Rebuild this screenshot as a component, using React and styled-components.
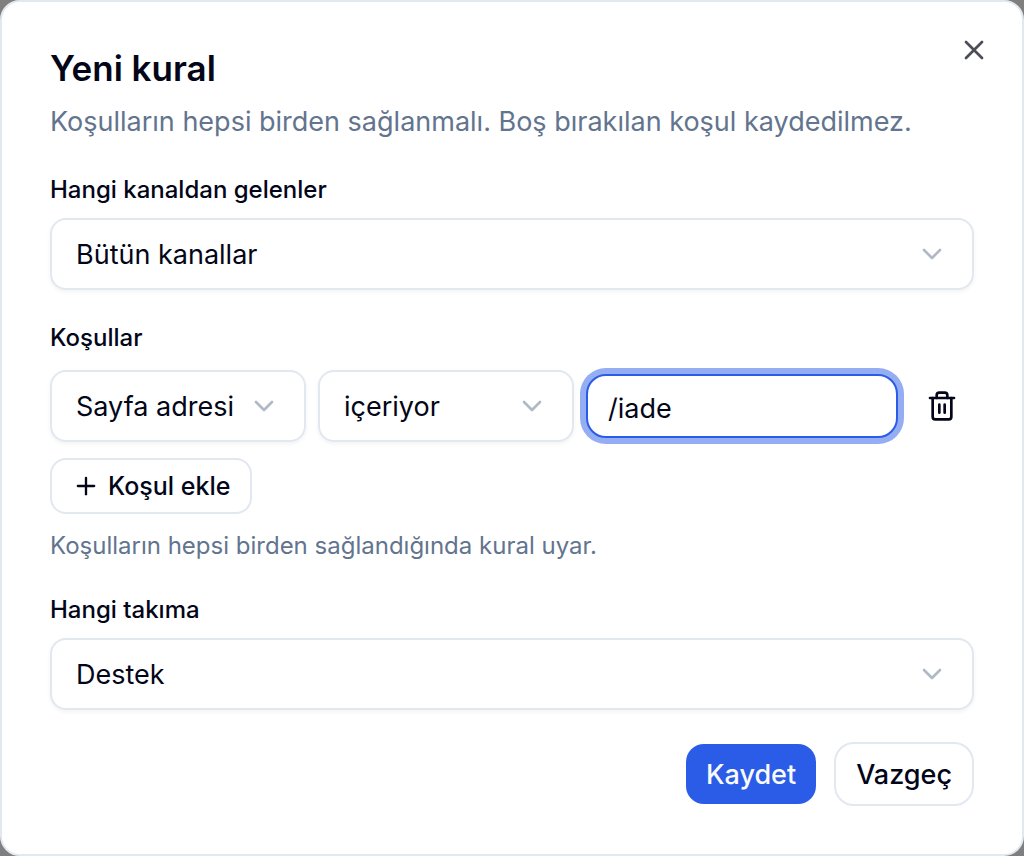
import React, { useState } from "react";
import styled, { createGlobalStyle, css } from "styled-components";
import { ChevronDown, Plus, Trash2, X } from "lucide-react";

const GlobalStyle = createGlobalStyle`
  *, *::before, *::after { box-sizing: border-box; }
  body {
    margin: 0;
    background: #7f7f7f;
    color: #020618;
    font-family: Inter, "Liberation Sans", sans-serif;
    -webkit-font-smoothing: antialiased;
  }
  button, input, select { font: inherit; color: inherit; margin: 0; }
`;

const Backdrop = styled.div`
  min-height: 100vh;
  display: grid;
  align-items: center;
  background: #7f7f7f;
`;

const Dialog = styled.section`
  position: relative;
  display: flex;
  flex-direction: column;
  gap: 32px;
  padding: 48px;
  background: #fff;
  border: 2px solid #e2e8f0;
  border-radius: 20px;
`;

const Header = styled.header`
  display: flex;
  flex-direction: column;
  gap: 16px;
`;

const Title = styled.h1`
  margin: 0;
  font-size: 35px;
  line-height: 36px;
  font-weight: 600;
`;

const Description = styled.p`
  margin: 0;
  font-size: 27px;
  line-height: 40px;
  color: #62748e;
`;

const CloseButton = styled.button`
  position: absolute;
  top: 32px;
  right: 32px;
  display: flex;
  padding: 0;
  border: 0;
  background: none;
  color: #4b4d5a;
  cursor: pointer;
`;

const Form = styled.form`
  display: flex;
  flex-direction: column;
  gap: 32px;
`;

const Field = styled.div`
  display: flex;
  flex-direction: column;
  gap: 12px;
`;

const ConditionGroup = styled.fieldset`
  display: flex;
  flex-direction: column;
  align-items: flex-start;
  gap: 16px;
  margin: 0;
  padding: 0;
  border: 0;
  min-width: 0;
`;

const labelText = css`
  font-size: 24px;
  line-height: 32px;
  font-weight: 500;
`;

const Label = styled.label`
  ${labelText}
`;

const GroupLabel = styled.div`
  ${labelText}
`;

const SelectBox = styled.div`
  position: relative;
  min-width: 0;
`;

const Select = styled.select`
  display: block;
  width: 100%;
  height: 72px;
  padding: 0 64px 0 24px;
  appearance: none;
  background: #fff;
  border: 2px solid #e2e8f0;
  border-radius: 16px;
  box-shadow: 0 2px 4px rgba(0, 0, 0, 0.05);
  font-size: 27px;
  outline: none;
`;

const Chevron = styled(ChevronDown)`
  position: absolute;
  top: 0;
  bottom: 0;
  right: 26px;
  margin: auto 0;
  color: #b0bac7;
  pointer-events: none;
`;

const ConditionRow = styled.div`
  align-self: stretch;
  display: grid;
  grid-template-columns: 256px 256px minmax(0, 1fr) 64px;
  align-items: center;
  gap: 12px;
`;

const ValueInput = styled.input`
  width: 100%;
  min-width: 0;
  height: 64px;
  padding: 4px 20px 0;
  background: #fff;
  border: 2px solid ${(p) => (p.$active ? "#2b5ce7" : "#e2e8f0")};
  border-radius: 20px;
  box-shadow: ${(p) => (p.$active ? "0 0 0 6px #95adf3" : "none")};
  font-size: 27px;
  outline: none;
`;

const IconButton = styled.button`
  display: flex;
  align-items: center;
  justify-content: center;
  height: 64px;
  padding: 0;
  border: 0;
  background: none;
  cursor: pointer;
`;

const AddButton = styled.button`
  display: flex;
  align-items: center;
  gap: 8px;
  height: 56px;
  padding: 0 20px;
  background: #fff;
  border: 2px solid #e2e8f0;
  border-radius: 16px;
  font-size: 25px;
  font-weight: 500;
  cursor: pointer;
`;

const Hint = styled.p`
  margin: 0;
  font-size: 24px;
  line-height: 32px;
  color: #62748e;
`;

const Footer = styled.footer`
  display: flex;
  justify-content: flex-end;
  gap: 16px;
`;

const Button = styled.button`
  height: 64px;
  padding: 0 20px;
  border: 2px solid ${(p) => (p.$primary ? "transparent" : "#e2e8f0")};
  border-radius: 20px;
  background: ${(p) => (p.$primary ? "#2b5ce7" : "#fff")};
  background-clip: padding-box;
  color: ${(p) => (p.$primary ? "#f8fafc" : "inherit")};
  font-size: 27px;
  font-weight: 500;
  cursor: pointer;
`;

function SelectField({ children, ...props }) {
  return (
    <SelectBox>
      <Select {...props}>{children}</Select>
      <Chevron size={32} />
    </SelectBox>
  );
}

export default function App() {
  const [value, setValue] = useState("/iade");

  return (
    <>
      <GlobalStyle />
      <Backdrop>
        <Dialog role="dialog" aria-labelledby="rule-title" aria-describedby="rule-description">
          <Header>
            <Title id="rule-title">Yeni kural</Title>
            <Description id="rule-description">
              Koşulların hepsi birden sağlanmalı. Boş bırakılan koşul kaydedilmez.
            </Description>
          </Header>

          <Form onSubmit={(e) => e.preventDefault()}>
            <Field>
              <Label htmlFor="channel">Hangi kanaldan gelenler</Label>
              <SelectField id="channel">
                <option>Bütün kanallar</option>
              </SelectField>
            </Field>

            <ConditionGroup aria-labelledby="conditions-label">
              <GroupLabel id="conditions-label">Koşullar</GroupLabel>
              <ConditionRow>
                <SelectField aria-label="Alan">
                  <option>Sayfa adresi</option>
                </SelectField>
                <SelectField aria-label="Karşılaştırma">
                  <option>içeriyor</option>
                </SelectField>
                <ValueInput
                  $active
                  type="text"
                  aria-label="Değer"
                  value={value}
                  onChange={(e) => setValue(e.target.value)}
                />
                <IconButton type="button" aria-label="Koşulu sil">
                  <Trash2 size={32} />
                </IconButton>
              </ConditionRow>
              <AddButton type="button">
                <Plus size={28} />
                Koşul ekle
              </AddButton>
              <Hint>Koşulların hepsi birden sağlandığında kural uyar.</Hint>
            </ConditionGroup>

            <Field>
              <Label htmlFor="team">Hangi takıma</Label>
              <SelectField id="team">
                <option>Destek</option>
              </SelectField>
            </Field>

            <Footer>
              <Button type="submit" $primary>Kaydet</Button>
              <Button type="button">Vazgeç</Button>
            </Footer>
          </Form>

          <CloseButton type="button" aria-label="Kapat">
            <X size={32} />
          </CloseButton>
        </Dialog>
      </Backdrop>
    </>
  );
}
